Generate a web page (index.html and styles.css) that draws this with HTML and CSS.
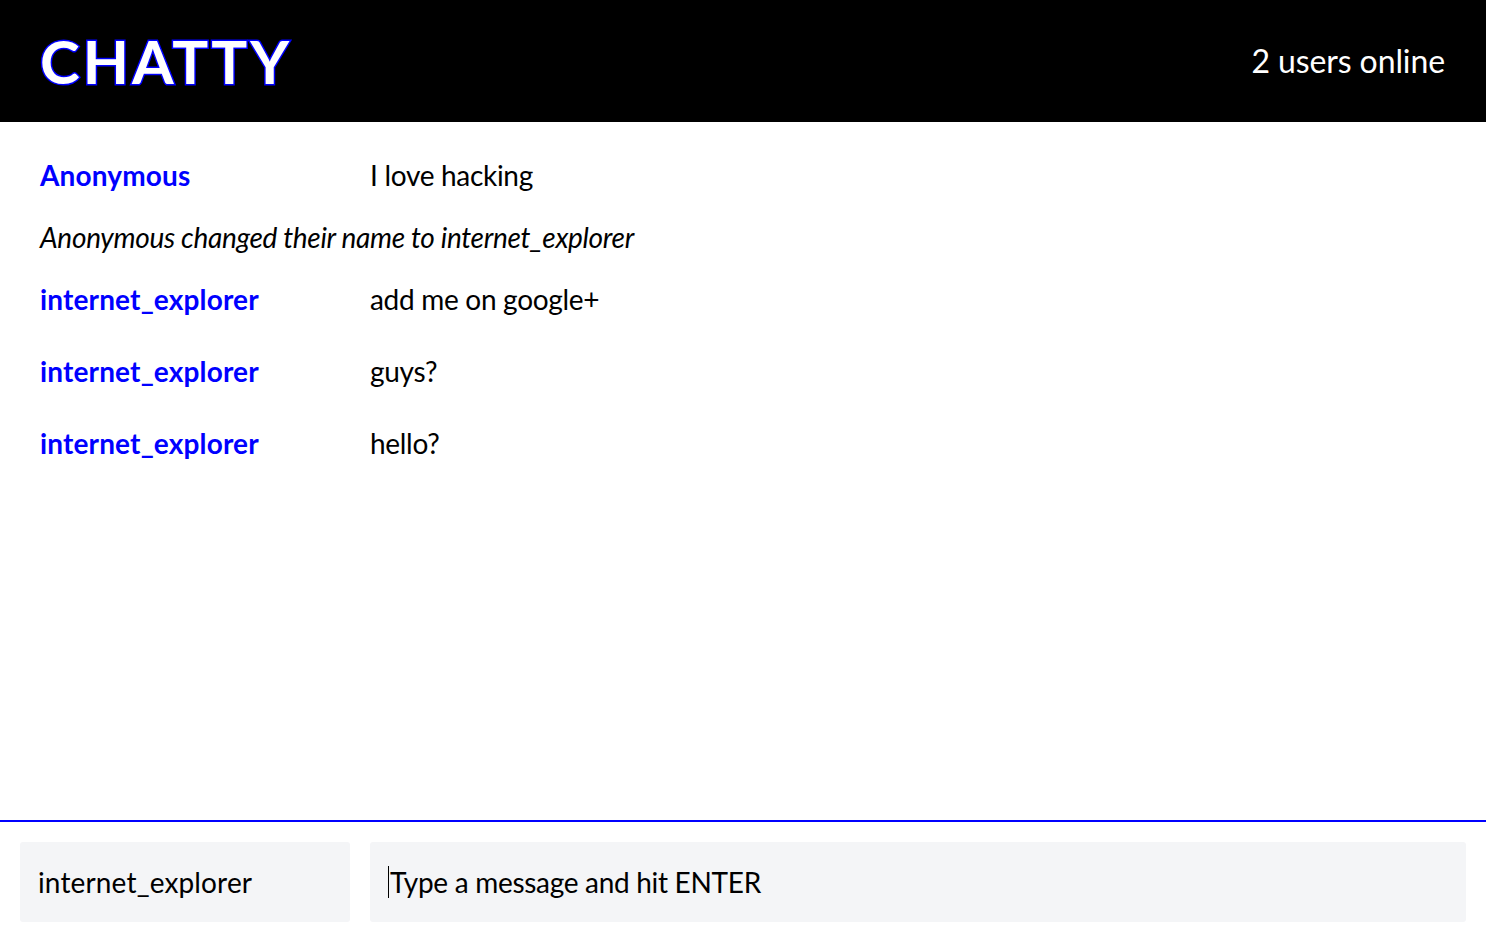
FILE: index.html
```html
<!DOCTYPE html>
<html>
<head>
<meta charset="utf-8">
<link rel="stylesheet" href="styles.css">
</head>
<body>
<div class="app">
  <header class="navbar">
    <h1 class="brand">CHATTY</h1>
    <span class="online">2 users online</span>
  </header>
  <main class="messages">
    <div class="message"><span class="user">Anonymous</span><span class="content">I love hacking</span></div>
    <div class="notice">Anonymous changed their name to internet_explorer</div>
    <div class="message"><span class="user">internet_explorer</span><span class="content">add me on google+</span></div>
    <div class="message spaced"><span class="user">internet_explorer</span><span class="content">guys?</span></div>
    <div class="message spaced"><span class="user">internet_explorer</span><span class="content">hello?</span></div>
  </main>
  <footer class="chatbar">
    <div class="field name">internet_explorer</div>
    <div class="field msg"><span class="caret"></span>Type a message and hit ENTER</div>
  </footer>
</div>
</body>
</html>
```
FILE: styles.css
```css
* { box-sizing: border-box; }
html, body { margin: 0; height: 100%; }
body { font-family: Lato, "Open Sans", sans-serif; background: #fff; color: #000; }
.app { display: flex; flex-direction: column; height: 938px; }
.navbar {
  height: 122px; background: #000; display: flex; align-items: center;
  justify-content: space-between; padding: 0 41px 2px 40px; flex: none;
}
.brand {
  margin: 0; font-size: 60px; font-weight: 700; color: #fff; letter-spacing: 3px;
  -webkit-text-stroke: 3px #0000ff; paint-order: stroke fill; line-height: 1;
  padding-top: 2px;
}
.online { color: #fff; font-size: 32px; font-weight: 400; letter-spacing: -0.1px; }
.messages { flex: 1; padding: 22px 40px 0; }
.message { display: flex; align-items: center; height: 62px; font-size: 28px; letter-spacing: -0.3px; }
.message.spaced { margin-top: 10px; }
.user { width: 330px; color: #0000ff; font-weight: 700; flex: none; letter-spacing: 0.15px; }
.notice { height: 62px; display: flex; align-items: center; font-size: 28px; font-style: italic; letter-spacing: -0.3px; }
.chatbar {
  flex: none; height: 118px; border-top: 2px solid #0000ff;
  display: flex; gap: 20px; padding: 20px 20px 16px;
}
.field {
  background: #f4f5f7; border-radius: 3px; height: 80px; display: flex; align-items: center;
  font-size: 28px; padding-left: 18px;
}
.field.name { width: 330px; letter-spacing: 0.15px; }
.field.msg { flex: 1; padding-left: 18px; letter-spacing: -0.3px; }
.caret { display: inline-block; width: 1px; height: 32px; background: #000; margin-right: 1px; }
```
